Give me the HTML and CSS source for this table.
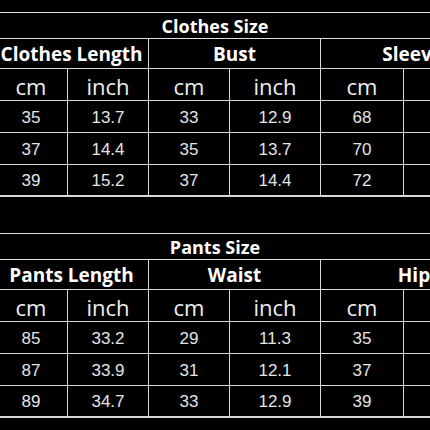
FILE: index.html
```html
<!DOCTYPE html>
<html>
<head>
<meta charset="utf-8">
<link rel="stylesheet" href="styles.css">
</head>
<body>
<div class="chart">
  <div class="title">Clothes Size</div>
  <div class="sheet sheet-clothes">
    <div class="cell head span2">Clothes Length</div>
    <div class="cell head span2">Bust</div>
    <div class="cell head span2">Sleeve Length</div>
    <div class="cell unit">cm</div><div class="cell unit">inch</div>
    <div class="cell unit">cm</div><div class="cell unit">inch</div>
    <div class="cell unit">cm</div><div class="cell unit"></div>
    <div class="cell num">35</div><div class="cell num">13.7</div><div class="cell num">33</div><div class="cell num">12.9</div><div class="cell num">68</div><div class="cell num"></div>
    <div class="cell num">37</div><div class="cell num">14.4</div><div class="cell num">35</div><div class="cell num">13.7</div><div class="cell num">70</div><div class="cell num"></div>
    <div class="cell num last">39</div><div class="cell num last">15.2</div><div class="cell num last">37</div><div class="cell num last">14.4</div><div class="cell num last">72</div><div class="cell num last"></div>
  </div>
</div>
<div class="chart">
  <div class="title">Pants Size</div>
  <div class="sheet sheet-pants">
    <div class="cell head span2">Pants Length</div>
    <div class="cell head span2">Waist</div>
    <div class="cell head span2">Hip</div>
    <div class="cell unit">cm</div><div class="cell unit">inch</div>
    <div class="cell unit">cm</div><div class="cell unit">inch</div>
    <div class="cell unit">cm</div><div class="cell unit"></div>
    <div class="cell num">85</div><div class="cell num">33.2</div><div class="cell num">29</div><div class="cell num">11.3</div><div class="cell num">35</div><div class="cell num"></div>
    <div class="cell num">87</div><div class="cell num">33.9</div><div class="cell num">31</div><div class="cell num">12.1</div><div class="cell num">37</div><div class="cell num"></div>
    <div class="cell num last">89</div><div class="cell num last">34.7</div><div class="cell num last">33</div><div class="cell num last">12.9</div><div class="cell num last">39</div><div class="cell num last"></div>
  </div>
</div>
</body>
</html>
```
FILE: styles.css
```css
html, body {
  margin: 0;
  padding: 0;
  background: #000;
}
body {
  width: 430px;
  height: 430px;
  overflow: hidden;
  padding-top: 12px;
  box-sizing: border-box;
  color: #fff;
}
.chart {
  margin-bottom: 36px;
  width: 430px;
  overflow: hidden;
}
.title {
  height: 27px;
  box-sizing: border-box;
  border-top: 1px solid #e0e0e0;
  border-bottom: 1px solid #e0e0e0;
  text-align: center;
  font-family: "Open Sans", "Liberation Sans", sans-serif;
  font-weight: 700;
  font-size: 18px;
  line-height: 25px;
  padding-top: 1px;
  color: #fff;
}
.sheet {
  display: grid;
  margin-left: -5px;
  width: 435px;
  grid-auto-rows: 32px;
  overflow: hidden;
}
.sheet-clothes {
  grid-template-columns: 73px 81px 81px 91px 83px 172px;
  grid-template-rows: 30px;
}
.sheet-pants {
  grid-template-columns: 73px 81px 81px 91px 83px 104px;
  grid-template-rows: 30px;
}
.cell {
  box-sizing: border-box;
  border-right: 1px solid #d8d8d8;
  border-bottom: 1px solid #d8d8d8;
  display: flex;
  align-items: center;
  justify-content: center;
  white-space: nowrap;
}
.span2 {
  grid-column: span 2;
}
.head {
  font-family: "Open Sans", "Liberation Sans", sans-serif;
  font-weight: 700;
  font-size: 19px;
  color: #fff;
}
.unit {
  font-family: "Open Sans", "Liberation Sans", sans-serif;
  font-size: 22px;
  color: #eeeeee;
  padding-top: 2px;
}
.num {
  font-family: "Liberation Sans", Arial, sans-serif;
  font-size: 17px;
  color: #e4e4e4;
  padding-top: 2px;
}
.last {
  border-bottom-width: 2px;
}
```
